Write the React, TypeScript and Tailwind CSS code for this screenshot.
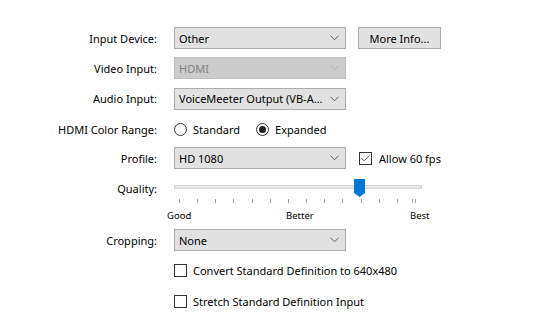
import { Check } from 'lucide-react';

const font = "font-['Segoe_UI','Noto_Sans',sans-serif]";

function Chevron({ disabled }: { disabled?: boolean }) {
  return (
    <svg width="9" height="6" viewBox="0 0 9 6" className="shrink-0">
      <path d="M0.5 0.8 L4.5 4.8 L8.5 0.8" fill="none" stroke={disabled ? '#b4b4b4' : '#606060'} strokeWidth="1" />
    </svg>
  );
}

function Combo({ value, disabled }: { value: string; disabled?: boolean }) {
  return (
    <div
      className={`w-[172px] h-[22px] flex items-center justify-between pl-[4px] pr-[6px] border ${
        disabled ? 'bg-[#cccccc] border-[#bfbfbf] text-[#838383]' : 'bg-[#e1e1e1] border-[#adadad] text-black'
      }`}
    >
      <span className="whitespace-nowrap">{value}</span>
      <Chevron disabled={disabled} />
    </div>
  );
}

function Label({ children }: { children?: React.ReactNode }) {
  return <div className="w-[157px] shrink-0 text-right mr-[17px]">{children}</div>;
}

function Box({ checked }: { checked?: boolean }) {
  return (
    <span className="w-[13px] h-[13px] border border-[#333333] bg-white flex items-center justify-center shrink-0">
      {checked && <Check size={11} strokeWidth={1.6} color="#222222" />}
    </span>
  );
}

function Radio({ checked }: { checked?: boolean }) {
  return (
    <span className="w-[13px] h-[13px] rounded-full border border-[#333333] bg-white flex items-center justify-center shrink-0">
      {checked && <span className="w-[7px] h-[7px] rounded-full bg-[#222222]" />}
    </span>
  );
}

function Slider() {
  const ticks = Array.from({ length: 14 }, (_, i) => 5 + i * 18.15);
  return (
    <svg width="248" height="26" viewBox="0 0 248 26">
      <rect x="0.5" y="8.5" width="247" height="3" fill="#e7eaea" stroke="#d6d6d6" />
      {ticks.map((x, i) => (
        <line key={i} x1={Math.round(x) + 0.5} y1="22" x2={Math.round(x) + 0.5} y2="26" stroke="#a0a0a0" />
      ))}
      <line x1="238.5" y1="22" x2="238.5" y2="26" stroke="#a0a0a0" />
      <path d="M180 2 H191 V16 L185.5 20 L180 16 Z" fill="#0078d7" />
    </svg>
  );
}

export default function App() {
  return (
    <div className={`w-[534px] h-[329px] bg-white text-black text-[11px] leading-[15px] ${font}`}>
      <div className="pt-[27px] flex flex-col">
        <div className="flex items-center h-[22px]">
          <Label>Input Device:</Label>
          <Combo value="Other" />
          <button className="ml-[12px] w-[83px] h-[22px] bg-[#e1e1e1] border border-[#adadad] text-black">
            More Info...
          </button>
        </div>

        <div className="flex items-center h-[22px] mt-[8px]">
          <Label>Video Input:</Label>
          <Combo value="HDMI" disabled />
        </div>

        <div className="flex items-center h-[23px] mt-[8px]">
          <Label>Audio Input:</Label>
          <Combo value="VoiceMeeter  Output  (VB-A..." />
        </div>

        <div className="flex items-center h-[22px] mt-[8px]">
          <Label>HDMI Color Range:</Label>
          <div className="flex items-center gap-[6px]">
            <Radio />
            <span>Standard</span>
          </div>
          <div className="flex items-center gap-[6px] ml-[16px]">
            <Radio checked />
            <span>Expanded</span>
          </div>
        </div>

        <div className="flex items-center h-[22px] mt-[7px]">
          <Label>Profile:</Label>
          <Combo value="HD 1080" />
          <div className="flex items-center gap-[7px] ml-[13px]">
            <Box checked />
            <span>Allow 60 fps</span>
          </div>
        </div>

        <div className="flex items-start mt-[8px]">
          <Label>
            <div className="pt-[4px]">Quality:</div>
          </Label>
          <div className="flex flex-col">
            <Slider />
            <div className="relative h-[14px] mt-[5px] text-[9.5px] w-[260px]">
              <span className="absolute left-[-7px] top-0">Good</span>
              <span className="absolute left-[112px] top-0">Better</span>
              <span className="absolute left-[236px] top-0">Best</span>
            </div>
          </div>
        </div>

        <div className="flex items-center h-[22px] mt-[7px]">
          <Label>Cropping:</Label>
          <Combo value="None" />
        </div>

        <div className="flex items-center h-[14px] mt-[12px]">
          <Label />
          <div className="flex items-center gap-[6px]">
            <Box />
            <span>Convert Standard Definition to 640x480</span>
          </div>
        </div>

        <div className="flex items-center h-[14px] mt-[17px]">
          <Label />
          <div className="flex items-center gap-[6px]">
            <Box />
            <span>Stretch Standard Definition Input</span>
          </div>
        </div>
      </div>
    </div>
  );
}
